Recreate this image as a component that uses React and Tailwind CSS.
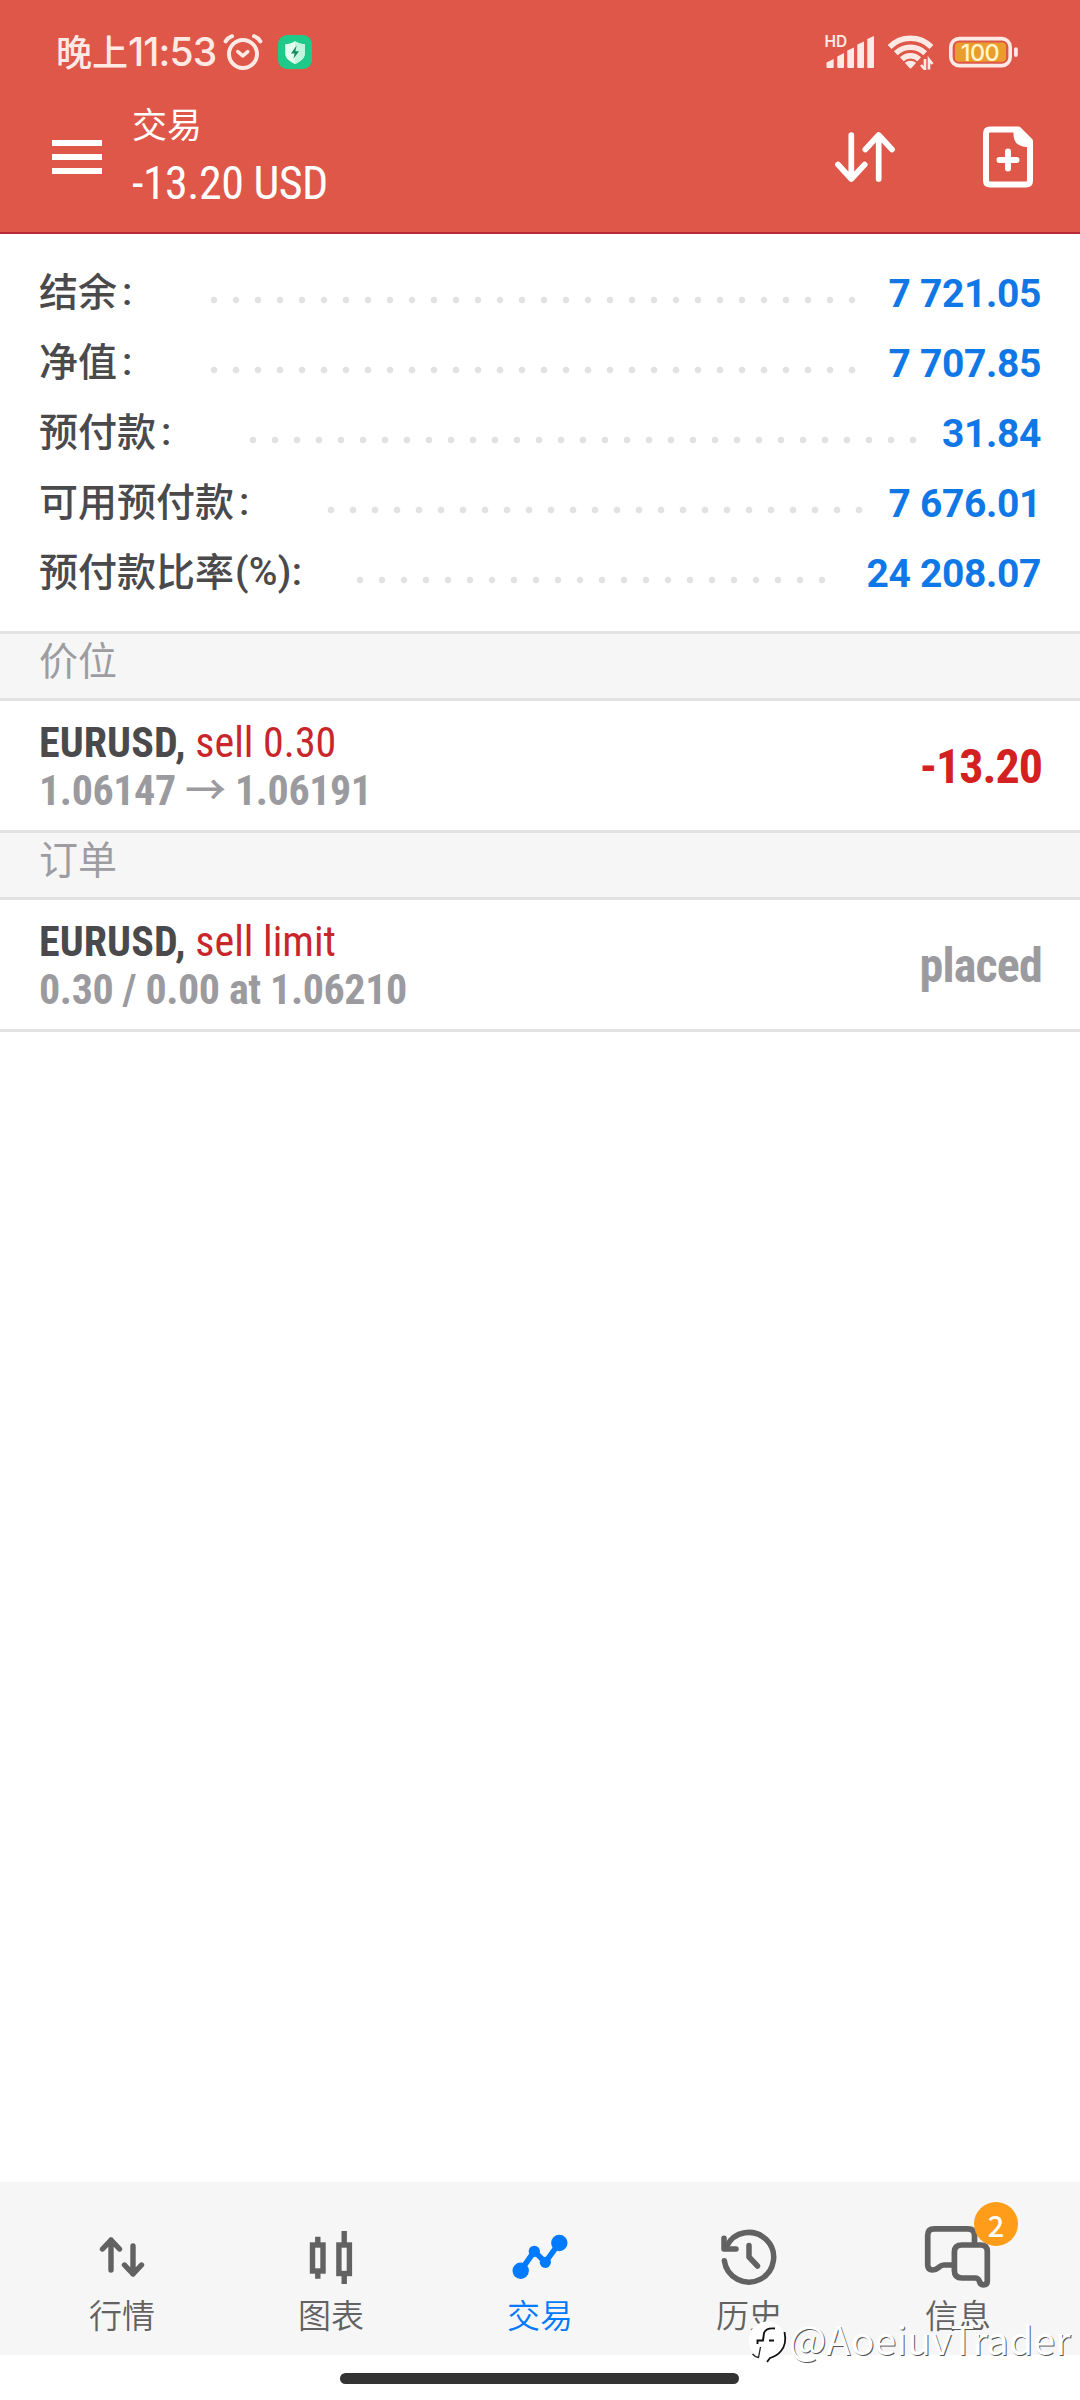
const cjk = "font-['Noto_Sans_CJK_SC',sans-serif]";

function AlarmIcon() {
  return (
    <svg width="40" height="36" viewBox="0 0 40 36" fill="none" stroke="#ffe9e4" strokeWidth="4" strokeLinecap="round" strokeLinejoin="round">
      <circle cx="20" cy="20" r="14" />
      <path d="M14.8 17.6 19.8 21.8 24.8 17.6" strokeWidth="3.6" />
      <path d="M2.6 7.4Q5 3.6 9 2.2M37.4 7.4Q35 3.6 31 2.2" strokeWidth="4" />
    </svg>
  );
}

function ShieldBadge() {
  return (
    <svg width="34" height="34" viewBox="0 0 34 34">
      <rect width="34" height="34" rx="9" fill="#1fc98a" />
      <path d="M17 6.2c3.2 2 6.2 2.7 9.8 3v9c0 4.6-3.6 8-9.8 10.8-6.2-2.8-9.8-6.2-9.8-10.8v-9c3.6-.3 6.6-1 9.8-3Z" fill="#e4fff2" />
      <path d="M17 6.2c3.2 2 6.2 2.7 9.8 3v9c0 4.6-3.6 8-9.8 10.8Z" fill="#c3f5de" />
      <path d="M18.6 10.6 13 18.6h3.6l-1.2 5.2 5.6-7.6h-3.6Z" fill="#128a60" />
    </svg>
  );
}

function SignalIcon() {
  return (
    <svg width="50" height="34" viewBox="0 0 50 34" fill="#ffe9e4" className="overflow-visible">
      <text x="-0.5" y="12.3" fontSize="15.5" fontWeight="600" fontFamily="Inter, sans-serif">HD</text>
      <path d="M1.5 27.5 8.7 24v8q0 1-1 1h-5.2q-1 0-1-1Z" />
      <path d="M12.3 21.5 19 18v14q0 1-1 1h-4.7q-1 0-1-1Z" />
      <path d="M22.3 15.5 29 12.5v19.5q0 1-1 1h-4.7q-1 0-1-1Z" />
      <path d="M32.3 9.5 39 6.5v25.5q0 1-1 1h-4.7q-1 0-1-1Z" />
      <path d="M42.3 4 49 1v31q0 1-1 1h-4.7q-1 0-1-1Z" />
    </svg>
  );
}

function WifiIcon() {
  return (
    <svg width="48" height="36" viewBox="0 0 48 36" fill="none" stroke="#ffe9e4" strokeWidth="5.4">
      <path d="M2.6 13A29.5 29.5 0 0 1 44.4 13" />
      <path d="M8.8 19.2A21 21 0 0 1 38.2 19.2" />
      <path d="M14.8 25.2A12.5 12.5 0 0 1 32.2 25.2" />
      <path d="M17.8 28.8Q23.5 24.6 29.2 28.8L24.5 34q-1 .8-2 0Z" fill="#ffe9e4" stroke="none" />
      <path d="M38 25v10.5l-4-4.500M42 35.500V25.500l3.500 4.500" strokeWidth="2.6" />
    </svg>
  );
}

function BatteryIcon() {
  return (
    <svg width="70" height="32" viewBox="0 0 70 32">
      <rect x="1.8" y="2.6" width="59.4" height="27" rx="8.5" fill="none" stroke="#ffe9e4" strokeWidth="3.6" />
      <rect x="6" y="6.4" width="51" height="19.4" rx="4" fill="#ea9c2e" />
      <rect x="65" y="11.3" width="3.8" height="9.6" rx="1.9" fill="#ffe9e4" />
      <text x="31" y="24.6" textAnchor="middle" fontSize="23.5" fontWeight="500" fontFamily="Inter, sans-serif" letterSpacing="-0.6" fill="#fff6cf">100</text>
    </svg>
  );
}

function SortIcon() {
  return (
    <svg width="60" height="52" viewBox="0 0 60 52" fill="none" stroke="#fff" strokeWidth="5.7" strokeLinecap="round" strokeLinejoin="round">
      <path d="M16.3 4V47M3 33.5 16.3 48 29.7 33.5" />
      <path d="M43.7 48V5M30.3 18.5 43.7 4 57 18.5" />
    </svg>
  );
}

function NewOrderIcon() {
  return (
    <svg width="50" height="62" viewBox="0 0 50 62" fill="none" stroke="#fff" strokeWidth="6">
      <path d="M7 3.5H35.5L47 15V54.5Q47 58.5 43 58.5H7Q3 58.5 3 54.5V7.5Q3 3.5 7 3.5Z" strokeLinejoin="round" />
      <path d="M30.5 3.5H36L48 15.5V21H43Q30.5 20 30.5 8Z" fill="#fff" stroke="none" />
      <path d="M25 25.5V42.5M16.5 34H33.5" strokeLinecap="round" />
    </svg>
  );
}

const summary = [
  { label: "结余", suffix: ":", value: "7 721.05", labelW: "w-[163.5px]", dotsW: "w-[660px]" },
  { label: "净值", suffix: ":", value: "7 707.85", labelW: "w-[163.5px]", dotsW: "w-[660px]" },
  { label: "预付款", suffix: ":", value: "31.84", labelW: "w-[202.5px]", dotsW: "w-[682px]" },
  { label: "可用预付款", suffix: ":", value: "7 676.01", labelW: "w-[280.5px]", dotsW: "w-[550px]" },
  { label: "预付款比率", suffix: "(%):", value: "24 208.07", labelW: "w-[309.5px]", dotsW: "w-[484px]" },
];

function SummaryRow({ label, suffix, value, labelW, dotsW }) {
  return (
    <div className="flex h-[70px] items-center pl-[39px] pr-[39px] text-[39px] leading-[48px]">
      <div className={`${labelW} flex shrink-0 font-medium text-[#4a4a4d]`}>
        <span className={`${cjk} -mt-[3px]`}>{label}</span>
        <span className={`font-['Roboto'] ${suffix === ":" ? "ml-[5px]" : "ml-[1px] tracking-[0.3px]"}`}>{suffix}</span>
      </div>
      <div className={`${dotsW} mt-[16px] h-[22px] shrink-0 bg-[radial-gradient(circle,#e2e2e2_2.8px,transparent_3.8px)] bg-[length:22px_22px]`} />
      <div className="ml-auto mt-[3px] whitespace-nowrap font-['Roboto'] font-bold tracking-[-0.35px] text-[#0f78e6]">{value}</div>
    </div>
  );
}

function SectionTitle({ children }) {
  return (
    <div className={`${cjk} h-[70px] border-y-[3px] border-[#e2e2e2] bg-[#f6f6f6] pl-[39px] text-[39px] leading-[48px] text-[#9d9da1]`}>
      {children}
    </div>
  );
}

function TradeRow({ action, detail, value, valueClass }) {
  return (
    <div className="flex h-[129px] items-start justify-between pl-[39px] pr-[38px] font-['Roboto_Condensed']">
      <div className="pt-[18px] text-[42px] leading-[48px]">
        <div className="h-12 whitespace-nowrap">
          <span className="font-bold tracking-[0.1px] text-[#4a4a4d]">EURUSD,</span>{" "}
          <span className="text-[#c8262a]">{action}</span>
        </div>
        <div className="h-12 whitespace-nowrap font-bold tracking-[-0.4px] text-[#9b9b9f]">{detail}</div>
      </div>
      <div className={`text-[48px] font-bold leading-[48px] ${valueClass}`}>{value}</div>
    </div>
  );
}

const navIcons = {
  quotes: (
    <g strokeWidth="5.4" strokeLinecap="round" strokeLinejoin="round">
      <path d="M21 42V12M12.5 21 21 12 29.5 21" />
      <path d="M43 18V46M34.500 37 43 46 51.500 37" />
    </g>
  ),
  chart: (
    <g strokeWidth="5.4">
      <path d="M18.8 8.7V16M18.8 45V50.7" />
      <rect x="13.5" y="17" width="10.5" height="26" />
      <path d="M45.2 3V15M45.2 47V56" />
      <rect x="39.9" y="17" width="10.5" height="28.5" />
    </g>
  ),
  trade: (
    <g strokeWidth="5.6">
      <path d="M12.7 42.7 26.3 23.3 37.3 34.3 51.3 15" />
      <g fill="currentColor" stroke="none">
        <circle cx="12.7" cy="42.7" r="8.2" />
        <circle cx="26.3" cy="23.3" r="5.6" />
        <circle cx="37.3" cy="34.3" r="5.6" />
        <circle cx="51.3" cy="15" r="8.2" />
      </g>
    </g>
  ),
  history: (
    <g strokeWidth="5.5" strokeLinecap="round" strokeLinejoin="round">
      <path d="M7.3 32.7A24.8 24.8 0 1 0 9.5 18.5" />
      <path d="M7 10.3V21H19M32 17.5V29L40.5 38" />
    </g>
  ),
  messages: (
    <g strokeWidth="5.7" strokeLinejoin="round" strokeLinecap="round">
      <path d="M26 37H18Q15.500 37 13 39.200Q9.500 42 6.500 42Q1.700 42 1.700 37V7.500Q1.700 .9 8.300 .9H42Q48.500 .9 48.500 7.500V16" />
      <path d="M36 17H54.800Q61.300 17 61.300 23.500V53Q61.300 56.800 57.500 56.800Q54.300 56.800 53.500 53.500Q52.500 50 49 50H36Q28.400 50 28.400 42.500V24Q28.400 17 36 17Z" />
    </g>
  ),
};

const nav = [
  { id: "quotes", label: "行情" },
  { id: "chart", label: "图表" },
  { id: "trade", label: "交易", active: true },
  { id: "history", label: "历史" },
  { id: "messages", label: "信息", badge: "2" },
];

function NavItem({ id, label, active, badge }) {
  return (
    <div className={`flex w-[209px] flex-col items-center pt-[46px] ${active ? "text-[#007aff]" : "text-[#626262]"}`}>
      <div className="relative h-[64px] w-[64px]">
        <svg width="64" height="64" viewBox="0 0 64 64" fill="none" stroke="currentColor" className="overflow-visible">
          {navIcons[id]}
        </svg>
        {badge && (
          <div className="absolute left-[48px] top-[-26px] flex h-11 w-11 items-center justify-center rounded-full bg-[#ff9c1a] font-['Noto_Sans_CJK_SC'] text-[29px] font-medium leading-[44px] text-white">
            {badge}
          </div>
        )}
      </div>
      <div className={`${cjk} mt-[1px] text-[33px] font-[350] leading-[42px]`}>{label}</div>
    </div>
  );
}

function Watermark() {
  return (
    <div className="absolute left-[749px] top-[2320px] flex items-start">
      <svg width="42" height="44" viewBox="0 0 42 44" fill="none">
        <circle cx="18" cy="20" r="18.5" fill="#fff" />
        <path d="M35.5 12Q38 24 32 31Q28 36 21 38L18 42" stroke="#111" strokeWidth="1.8" />
        <path d="M26 8.5Q17 7.5 15 13L14 20.5H8.5V24M20 20.5H25" stroke="#111" strokeWidth="1.9" />
        <path d="M11.5 27 9.5 37.5Q6 37 3.5 34" stroke="#222" strokeWidth="1.3" />
      </svg>
      <span className="-ml-[2px] -mt-[4px] whitespace-nowrap font-['Noto_Sans_CJK_SC'] text-[39.5px] leading-[44px] text-white [text-shadow:1px_1px_0.5px_#555]">
        @AoeiuvTrader
      </span>
    </div>
  );
}

export default function App() {
  return (
    <div className="relative flex h-[2400px] w-[1080px] flex-col overflow-hidden bg-white">
      <header className="h-[234px] border-b-2 border-[#b92a38] bg-[#de5748] text-white">
        <div className="flex h-24 items-center justify-between pl-14 pr-[61px] pt-2">
          <div className="flex items-center">
            <div className="flex w-[167px] items-center font-medium leading-[44px] text-[#ffe9e4]">
              <span className={`${cjk} -mt-1 text-[36px]`}>晚上</span>
              <span className="font-['Inter'] text-[39px] tracking-[-0.9px]">11:53</span>
            </div>
            <AlarmIcon />
            <div className="ml-[15px]">
              <ShieldBadge />
            </div>
          </div>
          <div className="flex items-center">
            <SignalIcon />
            <div className="ml-3">
              <WifiIcon />
            </div>
            <div className="ml-[14px]">
              <BatteryIcon />
            </div>
          </div>
        </div>
        <div className="flex h-[136px] items-center pb-[14px] pl-[52px] pr-[47px]">
          <div className="flex w-[50px] flex-col gap-2">
            <div className="h-1.5 bg-white" />
            <div className="h-1.5 bg-white" />
            <div className="h-1.5 bg-white" />
          </div>
          <div className="ml-[30px] self-start pt-[7px]">
            <div className={`${cjk} h-10 text-[35px] leading-[40px]`}>交易</div>
            <div className="mt-[13px] whitespace-nowrap font-['Roboto_Condensed'] text-[46px] leading-[54px] tracking-[-0.5px]">-13.20 USD</div>
          </div>
          <div className="ml-auto flex items-center gap-[88px]">
            <SortIcon />
            <NewOrderIcon />
          </div>
        </div>
      </header>

      <section className="h-[397px] pt-[23px]">
        {summary.map((row) => (
          <SummaryRow key={row.label} {...row} />
        ))}
      </section>

      <SectionTitle>价位</SectionTitle>
      <TradeRow
        action="sell 0.30"
        detail={
          <>
            1.06147 <span className="font-['Noto_Sans_CJK_SC'] text-[41px] font-medium leading-none">→</span> 1.06191
          </>
        }
        value="-13.20"
        valueClass="mt-[42px] tracking-[-1px] text-[#d32020]"
      />
      <SectionTitle>订单</SectionTitle>
      <TradeRow
        action="sell limit"
        detail="0.30 / 0.00 at 1.06210"
        value="placed"
        valueClass="mt-[42px] tracking-[-0.8px] text-[#9b9b9f]"
      />
      <div className="h-[3px] bg-[#e2e2e2]" />

      <nav className="mt-auto flex h-[173px] shrink-0 justify-center bg-[#f6f6f6]">
        {nav.map((item) => (
          <NavItem key={item.id} {...item} />
        ))}
      </nav>
      <div className="flex h-[45px] shrink-0 justify-center pt-[18px]">
        <div className="mr-[1px] h-[11px] w-[399px] rounded-full bg-[#333333]" />
      </div>
      <Watermark />
    </div>
  );
}
